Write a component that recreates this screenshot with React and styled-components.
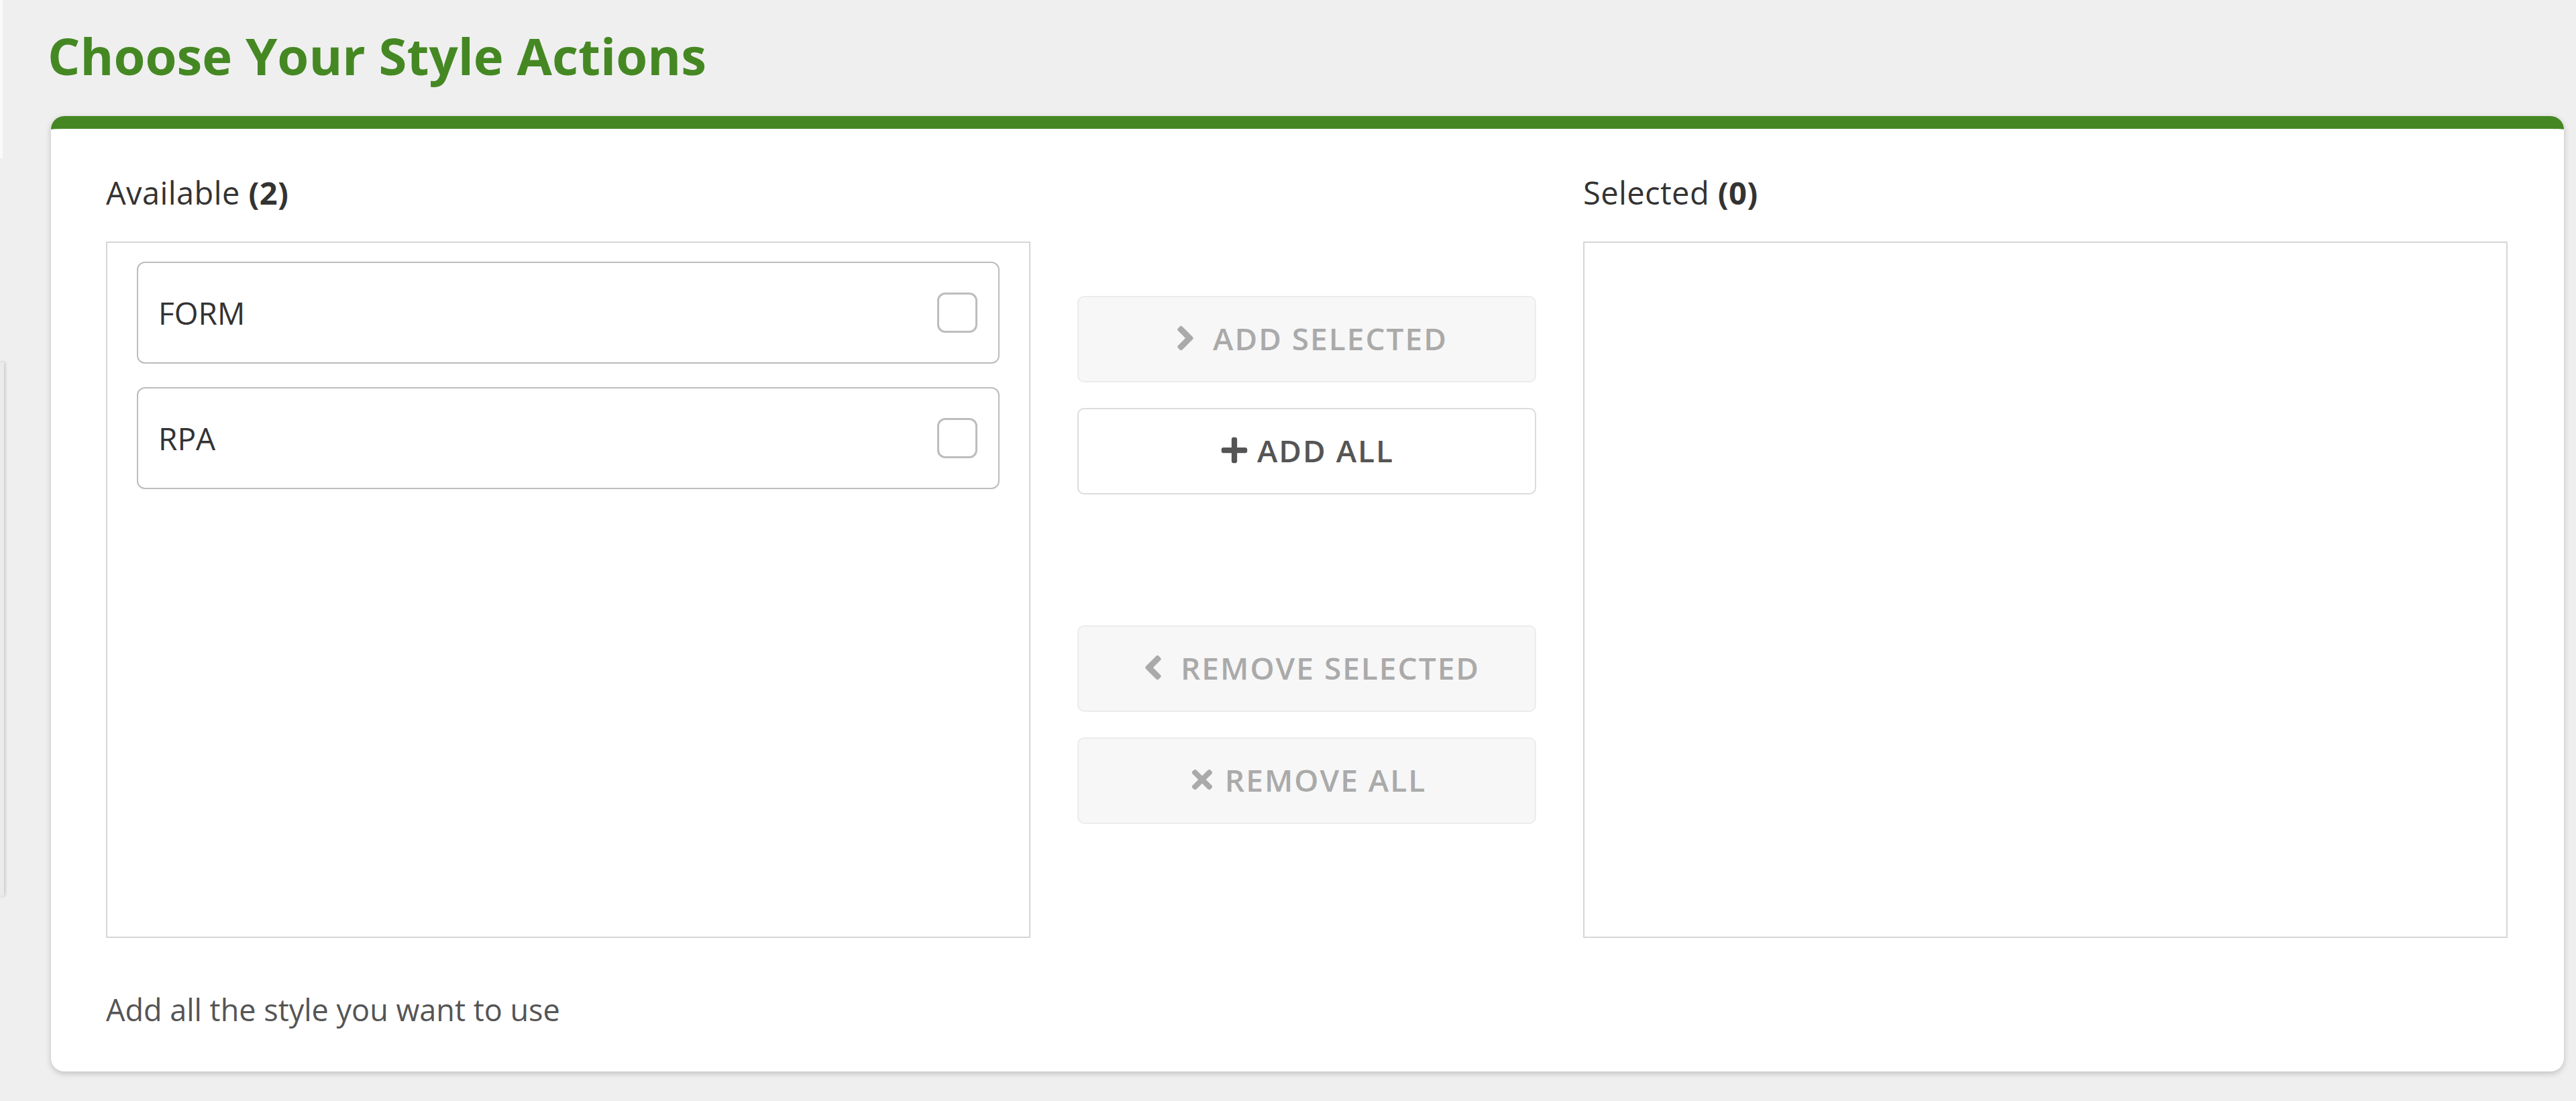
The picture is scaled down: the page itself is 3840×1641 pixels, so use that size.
import React, { useState } from 'react';
import styled, { createGlobalStyle } from 'styled-components';
import { FaAngleRight, FaAngleLeft, FaPlus, FaTimes } from 'react-icons/fa';

const GlobalStyle = createGlobalStyle`
  html, body {
    margin: 0;
    padding: 0;
    background: #efefef;
    font-family: "Open Sans", "Liberation Sans", sans-serif;
    color: #333;
  }
  * {
    box-sizing: border-box;
  }
`;

const Page = styled('div')`
  min-height: 100vh;
  padding: 37px 18px 40px 76px;
`;

// edges of neighbouring panels peeking in at the left border
const EdgeTab = styled('div')`
  position: fixed;
  left: 0;
  top: ${(p) => p.top}px;
  width: ${(p) => p.width}px;
  height: ${(p) => p.height}px;
  background: ${(p) => p.bg};
  box-shadow: ${(p) => (p.shadow ? '1px 0 5px rgba(0, 0, 0, 0.22)' : 'none')};
`;

const Title = styled('h1')`
  margin: 0 0 45px -5px;
  font-size: 76px;
  line-height: 1.2;
  font-weight: 700;
  color: #458823;
`;

const Card = styled('section')`
  background: #fff;
  border-top: 19px solid #458823;
  border-radius: 20px;
  box-shadow: 0 3px 10px rgba(0, 0, 0, 0.2);
  padding: 63px 84px 60px 82px;
`;

const Columns = styled('div')`
  display: grid;
  grid-template-columns: 1fr 684px 1fr;
  column-gap: 70px;
`;

const Column = styled('div')`
  display: flex;
  flex-direction: column;
`;

const Label = styled('div')`
  font-size: 47px;
  line-height: 64px;
  color: #333;
  margin-bottom: 41px;
  letter-spacing: 0.4px;

  b {
    font-weight: 700;
  }
`;

const ListBox = styled('div')`
  height: 1038px;
  border: 2px solid #d6d6d6;
  padding: 28px 44px;
  display: flex;
  flex-direction: column;
  gap: 35px;
`;

const Item = styled('label')`
  height: 152px;
  border: 2px solid #bcbcbc;
  border-radius: 12px;
  display: flex;
  align-items: center;
  justify-content: space-between;
  padding: 0 31px 0 30px;
  font-size: 46px;
  color: #333;
  cursor: pointer;
`;

const Check = styled('span')`
  width: 60px;
  height: 60px;
  border: 3px solid #bdbdbd;
  border-radius: 12px;
  background: ${(p) => (p.checked ? '#458823' : '#fff')};
`;

const Actions = styled('div')`
  display: flex;
  flex-direction: column;
  padding-top: 186px;
`;

const ButtonGroup = styled('div')`
  display: flex;
  flex-direction: column;
  gap: 38px;
  margin-bottom: ${(p) => p.spaceAfter || 0}px;
`;

const ActionButton = styled('button')`
  height: 129px;
  width: 100%;
  display: flex;
  align-items: center;
  justify-content: center;
  gap: 12px;
  padding: 0 0 4px;
  border-radius: 10px;
  font-family: "Open Sans", "Liberation Sans", sans-serif;
  font-size: 46px;
  font-weight: 600;
  letter-spacing: 2px;
  border: 2px solid ${(p) => (p.disabled ? '#ececec' : '#dcdcdc')};
  background: ${(p) => (p.disabled ? '#f7f7f7' : '#fff')};
  color: ${(p) => (p.disabled ? '#aaaaaa' : '#555')};
  cursor: ${(p) => (p.disabled ? 'default' : 'pointer')};

  svg {
    flex: none;
  }
`;

const Hint = styled('p')`
  margin: 75px 0 0;
  font-size: 45px;
  line-height: 64px;
  color: #555;
`;

const STYLES = ['FORM', 'RPA'];

export default function App() {
  const [checked, setChecked] = useState({});

  return (
    <Page>
      <GlobalStyle />
      <EdgeTab top={0} width={4} height={236} bg="#fafafa" />
      <EdgeTab top={540} width={6} height={795} bg="#ebebeb" shadow />
      <Title>Choose Your Style Actions</Title>
      <Card>
        <Columns>
          <Column>
            <Label>
              Available <b>({STYLES.length})</b>
            </Label>
            <ListBox>
              {STYLES.map((name) => (
                <Item
                  key={name}
                  onClick={() => setChecked({ ...checked, [name]: !checked[name] })}
                >
                  {name}
                  <Check checked={!!checked[name]} />
                </Item>
              ))}
            </ListBox>
          </Column>
          <Actions>
            <ButtonGroup spaceAfter={195}>
              <ActionButton disabled>
                <FaAngleRight size={58} />
                ADD SELECTED
              </ActionButton>
              <ActionButton>
                <FaPlus size={44} />
                ADD ALL
              </ActionButton>
            </ButtonGroup>
            <ButtonGroup>
              <ActionButton disabled>
                <FaAngleLeft size={58} />
                REMOVE SELECTED
              </ActionButton>
              <ActionButton disabled>
                <FaTimes size={44} />
                REMOVE ALL
              </ActionButton>
            </ButtonGroup>
          </Actions>
          <Column>
            <Label>
              Selected <b>(0)</b>
            </Label>
            <ListBox />
          </Column>
        </Columns>
        <Hint>Add all the style you want to use</Hint>
      </Card>
    </Page>
  );
}
